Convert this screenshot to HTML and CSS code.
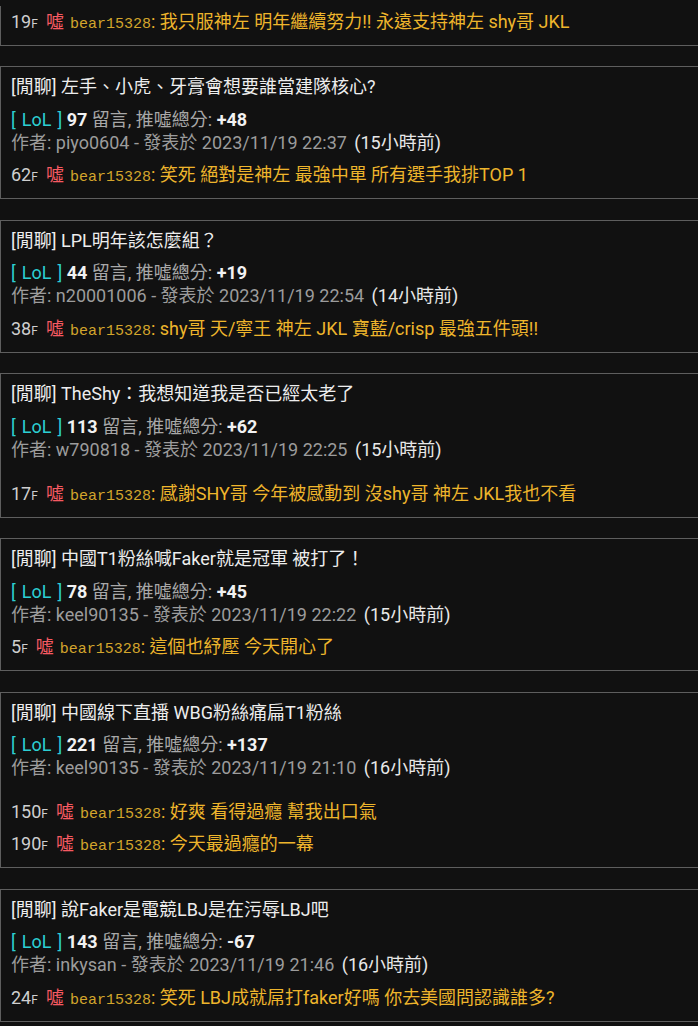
FILE: index.html
```html
<!DOCTYPE html>
<html lang="zh-Hant">
<head>
<meta charset="utf-8">
<title>推文列表</title>
<link rel="stylesheet" href="styles.css">
</head>
<body>
<div class="list">
  <div class="card card--clipped">
    <div class="comments">
      <div class="push"><span class="floor">19<small>F</small></span><span class="tag">噓</span><span class="user">bear15328</span><span class="content">: 我只服神左 明年繼續努力!! 永遠支持神左 shy哥 JKL</span></div>
    </div>
  </div>

  <div class="card">
    <div class="title">[閒聊] 左手、小虎、牙膏會想要誰當建隊核心?</div>
    <div class="meta"><span class="board">[<span class="board-name">LoL</span>]</span> <b>97</b> 留言, 推噓總分: <b>+48</b></div>
    <div class="author">作者: piyo0604 - 發表於 2023/11/19 22:37 <span class="ago">(15小時前)</span></div>
    <div class="comments">
      <div class="push"><span class="floor">62<small>F</small></span><span class="tag">噓</span><span class="user">bear15328</span><span class="content">: 笑死 絕對是神左 最強中單 所有選手我排TOP 1</span></div>
    </div>
  </div>

  <div class="card">
    <div class="title">[閒聊] LPL明年該怎麼組？</div>
    <div class="meta"><span class="board">[<span class="board-name">LoL</span>]</span> <b>44</b> 留言, 推噓總分: <b>+19</b></div>
    <div class="author">作者: n20001006 - 發表於 2023/11/19 22:54 <span class="ago">(14小時前)</span></div>
    <div class="comments">
      <div class="push"><span class="floor">38<small>F</small></span><span class="tag">噓</span><span class="user">bear15328</span><span class="content">: shy哥 天/寧王 神左 JKL 寶藍/crisp 最強五件頭!!</span></div>
    </div>
  </div>

  <div class="card">
    <div class="title">[閒聊] TheShy：我想知道我是否已經太老了</div>
    <div class="meta"><span class="board">[<span class="board-name">LoL</span>]</span> <b>113</b> 留言, 推噓總分: <b>+62</b></div>
    <div class="author">作者: w790818 - 發表於 2023/11/19 22:25 <span class="ago">(15小時前)</span></div>
    <div class="comments comments--spaced">
      <div class="push"><span class="floor">17<small>F</small></span><span class="tag">噓</span><span class="user">bear15328</span><span class="content">: 感謝SHY哥 今年被感動到 沒shy哥 神左 JKL我也不看</span></div>
    </div>
  </div>

  <div class="card">
    <div class="title">[閒聊] 中國T1粉絲喊Faker就是冠軍 被打了！</div>
    <div class="meta"><span class="board">[<span class="board-name">LoL</span>]</span> <b>78</b> 留言, 推噓總分: <b>+45</b></div>
    <div class="author">作者: keel90135 - 發表於 2023/11/19 22:22 <span class="ago">(15小時前)</span></div>
    <div class="comments">
      <div class="push"><span class="floor">5<small>F</small></span><span class="tag">噓</span><span class="user">bear15328</span><span class="content">: 這個也紓壓 今天開心了</span></div>
    </div>
  </div>

  <div class="card">
    <div class="title">[閒聊] 中國線下直播 WBG粉絲痛扁T1粉絲</div>
    <div class="meta"><span class="board">[<span class="board-name">LoL</span>]</span> <b>221</b> 留言, 推噓總分: <b>+137</b></div>
    <div class="author">作者: keel90135 - 發表於 2023/11/19 21:10 <span class="ago">(16小時前)</span></div>
    <div class="comments comments--spaced">
      <div class="push"><span class="floor">150<small>F</small></span><span class="tag">噓</span><span class="user">bear15328</span><span class="content">: 好爽 看得過癮 幫我出口氣</span></div>
      <div class="push"><span class="floor">190<small>F</small></span><span class="tag">噓</span><span class="user">bear15328</span><span class="content">: 今天最過癮的一幕</span></div>
    </div>
  </div>

  <div class="card">
    <div class="title">[閒聊] 說Faker是電競LBJ是在污辱LBJ吧</div>
    <div class="meta"><span class="board">[<span class="board-name">LoL</span>]</span> <b>143</b> 留言, 推噓總分: <b>-67</b></div>
    <div class="author">作者: inkysan - 發表於 2023/11/19 21:46 <span class="ago">(16小時前)</span></div>
    <div class="comments">
      <div class="push"><span class="floor">24<small>F</small></span><span class="tag">噓</span><span class="user">bear15328</span><span class="content">: 笑死 LBJ成就屌打faker好嗎 你去美國問認識誰多?</span></div>
    </div>
  </div>
</div>
</body>
</html>
```

FILE: styles.css
```css
html, body {
  margin: 0;
  padding: 0;
  background: #111111;
}

body {
  font-family: Roboto, "Noto Sans CJK TC", sans-serif;
  font-size: 18px;
  color: #e6e6e6;
  overflow: hidden;
}

.list {
  overflow: hidden;
}

.card {
  border: 1px solid #5e5e5e;
  margin-right: -2px;
  margin-bottom: 20.5px;
  padding: 9px 0 7px 10px;
}

.card--clipped {
  border-top: none;
  padding-top: 0;
}

.title {
  line-height: 22px;
  margin-bottom: 9.5px;
  color: #ededed;
  white-space: nowrap;
}

.meta,
.author {
  line-height: 23px;
  white-space: nowrap;
}

.meta {
  color: #a8a8a8;
}

.meta b {
  color: #f2f2f2;
  font-weight: 700;
}

.board {
  color: #2ccfd2;
}

.board-name {
  margin: 0 6px;
}

.author {
  color: #9c9c9c;
}

.ago {
  color: #e8e8e8;
  margin-left: 3px;
}

.comments {
  margin-top: 5.5px;
}

.comments--spaced {
  margin-top: 17px;
}

.push {
  line-height: 32px;
  white-space: nowrap;
}

.floor,
.user,
.floor small {
  line-height: 1;
}

.floor {
  color: #cfcfcf;
  margin-right: 8px;
}

.floor small {
  font-size: 12px;
}

.tag {
  color: #f65a62;
  margin-right: 6px;
}

.user {
  font-family: "Liberation Mono", "DejaVu Sans Mono", monospace;
  font-size: 15px;
  color: #d3a52c;
}

.content {
  color: #eeb52c;
}
```
